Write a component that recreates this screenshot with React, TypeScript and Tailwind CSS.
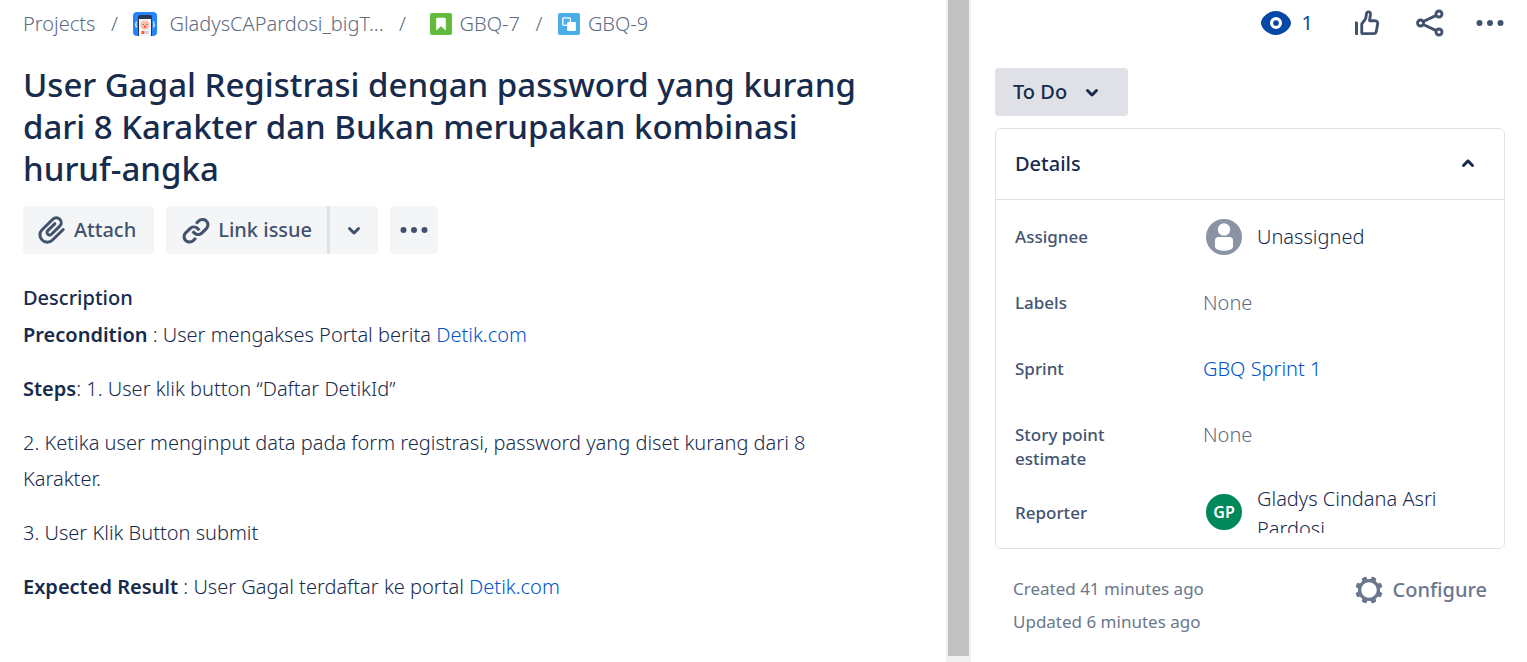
import type { ReactNode } from "react";

const chevronDown =
  "M8.292 10.293a1.009 1.009 0 000 1.419l2.939 2.965c.218.215.5.322.779.322s.556-.107.769-.322l2.93-2.955a1.01 1.01 0 000-1.419.987.987 0 00-1.406 0l-2.298 2.317-2.307-2.327a.99.99 0 00-1.406 0z";

function Icon({ children, className = "" }: { children: ReactNode; className?: string }) {
  return (
    <svg viewBox="0 0 24 24" fill="currentColor" aria-hidden="true" className={`size-9 shrink-0 ${className}`}>
      {children}
    </svg>
  );
}

function DotsIcon() {
  return (
    <Icon>
      <circle cx="5" cy="12" r="2" />
      <circle cx="12" cy="12" r="2" />
      <circle cx="19" cy="12" r="2" />
    </Icon>
  );
}

function ProjectAvatar() {
  return (
    <svg viewBox="0 0 24 24" className="size-6 shrink-0" aria-hidden="true">
      <rect width="24" height="24" rx="4" fill="#2684ff" />
      <path d="M5 24V5a2 2 0 012-2h10a2 2 0 012 2v19z" fill="#253858" />
      <path d="M6 7h12v17H6z" fill="#f4f5f7" />
      <circle cx="12" cy="13" r="4.500" fill="#ffbdad" />
      <path d="M9.500 12.500h1.500M13 12.500h1.500" stroke="#505f79" strokeWidth=".7" />
      <circle cx="12" cy="14.800" r="1.200" fill="#ff5630" />
      <rect x="8.500" y="19" width="3" height="3" fill="#ff5630" />
      <rect x="12.500" y="19" width="3" height="3" fill="#b3d4ff" />
      <path d="M3.500 9.500q-1.500 3 0 6M20.500 9.500q1.500 3 0 6" fill="none" stroke="#deebff" strokeWidth="1.300" />
    </svg>
  );
}

function StoryIcon() {
  return (
    <svg viewBox="0 0 16 16" className="size-[22px] shrink-0" aria-hidden="true">
      <rect width="16" height="16" rx="1.500" fill="#63ba3c" />
      <path d="M4.500 4.500a1 1 0 011-1h5a1 1 0 011 1v8.300L8 9.600l-3.500 3.200z" fill="#fff" />
    </svg>
  );
}

function SubtaskIcon() {
  return (
    <svg viewBox="0 0 16 16" className="size-[22px] shrink-0" aria-hidden="true">
      <rect width="16" height="16" rx="1.500" fill="#4bade8" />
      <rect x="3.500" y="3.500" width="5.500" height="5.500" rx=".8" fill="none" stroke="#fff" />
      <rect x="6.600" y="6.600" width="6.400" height="6.400" rx=".9" fill="#fff" />
    </svg>
  );
}

function Field({ label, children }: { label: string; children: ReactNode }) {
  return (
    <div className="flex min-h-[66px] items-start">
      <dt className="w-[188px] shrink-0 pt-[6px] pr-16 text-[17px] leading-6 font-medium text-[#44546f]">{label}</dt>
      <dd className="flex min-w-0 flex-1 items-center">{children}</dd>
    </div>
  );
}

function Slash() {
  return <span className="w-[38px] text-center">/</span>;
}

export default function App() {
  return (
    <div className="flex h-screen min-h-[662px] bg-white font-['Noto_Sans','Open_Sans',sans-serif] text-[20px] font-light text-[#172b4d]">
      <main className="min-w-0 flex-1 pr-16 pl-[23px]">
        <nav aria-label="Breadcrumb" className="flex h-12 items-center text-[#5e6c84]">
          <a href="#projects">Projects</a>
          <Slash />
          <a href="#project" className="flex items-center gap-3">
            <ProjectAvatar />
            GladysCAPardosi_bigT...
          </a>
          <Slash />
          <a href="#gbq-7" className="flex items-center gap-2 pl-2">
            <StoryIcon />
            GBQ-7
          </a>
          <Slash />
          <a href="#gbq-9" className="flex items-center gap-2">
            <SubtaskIcon />
            GBQ-9
          </a>
        </nav>

        <h1 className="mt-4 text-[33px] leading-[42px] font-medium">
          User Gagal Registrasi dengan password yang kurang dari 8 Karakter dan Bukan merupakan kombinasi huruf-angka
        </h1>

        <div className="mt-4 flex gap-3 font-medium text-[#42526e]">
          <button className="flex h-12 items-center gap-1 rounded bg-[#f4f5f7] pr-[18px] pl-[11px]">
            <Icon>
              <path d="M11.643 17.965c-1.53 1.495-4.016 1.496-5.542.004a3.773 3.773 0 01.002-5.412l7.147-6.985a2.316 2.316 0 013.24-.002 2.198 2.198 0 010 3.154l-5.55 5.422a.743.743 0 01-1.039 0 .709.709 0 01.001-1.02l4.742-4.63a1 1 0 00-1.397-1.431l-4.742 4.63a2.709 2.709 0 000 3.88 2.743 2.743 0 003.836 0l5.55-5.421a4.198 4.198 0 000-6.016 4.316 4.316 0 00-6.038.002l-7.147 6.985a5.773 5.773 0 00-.002 8.274 5.96 5.96 0 008.338.001l7.147-6.985a1 1 0 00-1.397-1.431z" />
            </Icon>
            Attach
          </button>
          <div className="flex">
            <button className="flex h-12 items-center gap-1 rounded-l bg-[#f4f5f7] pr-[15px] pl-3">
              <Icon>
                <path d="M12.856 5.457l-.937.92a1.002 1.002 0 000 1.437 1.047 1.047 0 001.463 0l.984-.966c.967-.95 2.542-1.135 3.602-.288a2.54 2.54 0 01.203 3.81l-2.903 2.852a2.646 2.646 0 01-3.696 0l-1.11-1.09L9 13.57l1.108 1.089c1.822 1.788 4.802 1.788 6.622 0l2.905-2.852a4.558 4.558 0 00-.357-6.82c-1.893-1.517-4.695-1.226-6.422.47" />
                <path d="M11.144 19.543l.937-.92a1.002 1.002 0 000-1.437 1.047 1.047 0 00-1.462 0l-.985.966c-.967.95-2.542 1.135-3.602.288a2.54 2.54 0 01-.203-3.81l2.903-2.852a2.646 2.646 0 013.696 0l1.11 1.09L15 11.43l-1.108-1.089c-1.822-1.788-4.802-1.788-6.622 0l-2.905 2.852a4.558 4.558 0 00.357 6.82c1.893 1.517 4.695 1.226 6.422-.47" />
              </Icon>
              Link issue
            </button>
            <button
              aria-label="More link options"
              className="flex h-12 w-[51px] items-center justify-center rounded-r border-l-3 border-[#dfe1e6] bg-[#f4f5f7]"
            >
              <Icon>
                <path d={chevronDown} />
              </Icon>
            </button>
          </div>
          <button aria-label="More actions" className="flex size-12 items-center justify-center rounded bg-[#f4f5f7]">
            <DotsIcon />
          </button>
        </div>

        <section className="mt-[26px]">
          <h2 className="leading-9 font-medium">Description</h2>
          <div className="flex flex-col gap-[18px] pt-px leading-9">
            <p>
              <strong className="font-semibold">Precondition</strong> : User mengakses Portal berita{" "}
              <a href="#detik" className="text-[#0052cc]">Detik.com</a>
            </p>
            <p>
              <strong className="font-semibold">Steps</strong>: 1. User klik button “Daftar DetikId”
            </p>
            <p>2. Ketika user menginput data pada form registrasi, password yang diset kurang dari 8 Karakter.</p>
            <p>3. User Klik Button submit</p>
            <p>
              <strong className="font-semibold">Expected Result</strong> : User Gagal terdaftar ke portal{" "}
              <a href="#detik" className="text-[#0052cc]">Detik.com</a>
            </p>
          </div>
        </section>
      </main>

      <div className="flex w-[25px] shrink-0 bg-[#f1f1f1] px-[2px] pb-[6px]" aria-hidden="true">
        <div className="flex-1 bg-[#c1c1c1]" />
      </div>

      <aside className="w-[556px] shrink-0 pr-[22px] pl-6">
        <div className="flex h-[46px] items-center justify-end text-[#42526e]">
          <button aria-label="Watchers" className="mr-[36px] flex items-center gap-[8px] font-normal text-[#0747a6]">
            <Icon>
              <path
                fillRule="evenodd"
                d="M12 4C7 4 2 8.500 2 12s5 8 10 8 10-4.500 10-8-5-8-10-8zm0 4a4 4 0 110 8 4 4 0 010-8z"
              />
              <circle cx="12" cy="12" r="1.900" />
            </Icon>
            1
          </button>
          <button aria-label="Like" className="mr-[27px]">
            <Icon>
              <path
                fill="none"
                stroke="currentColor"
                strokeWidth="1.900"
                strokeLinejoin="round"
                d="M8.500 18.800V12.600L11 9.200C11.500 8.300 11.400 6.500 11.700 5.500C12.200 4 14.500 4.400 14.300 6.300L13.700 10.500H17.300C18.800 10.500 19.300 11.500 19.100 12.700L18.200 17.500C18 18.700 17.300 19.100 16.300 19.100H9.300C8.800 19.100 8.500 19 8.500 18.800Z"
              />
              <path d="M4 11h1.200a.8.8 0 01.8.8V20H4.800a.8.8 0 01-.8-.8z" />
            </Icon>
          </button>
          <button aria-label="Share" className="mr-[24px]">
            <Icon>
              <g fill="none" stroke="currentColor" strokeWidth="1.900">
                <circle cx="5.700" cy="12" r="2" />
                <circle cx="18" cy="6" r="2" />
                <circle cx="18" cy="18" r="2" />
                <path d="M7.500 11l8.700-4.100M7.500 13l8.700 4.100" />
              </g>
            </Icon>
          </button>
          <button aria-label="Actions" className="-mr-[3px]">
            <DotsIcon />
          </button>
        </div>

        <button className="mt-[22px] flex h-12 items-center gap-[7px] rounded bg-[#dfe1e6] px-[18px] font-medium">
          To Do
          <Icon>
            <path d={chevronDown} />
          </Icon>
        </button>

        <section className="mt-3 rounded-md border border-[#dfe1e6]">
          <button className="flex h-[71px] w-full items-center justify-between border-b border-[#dfe1e6] pr-[18px] pl-[19px] font-medium">
            Details
            <Icon className="rotate-180">
              <path d={chevronDown} />
            </Icon>
          </button>
          <dl className="pt-[19px] pr-12 pb-[15px] pl-[19px]">
            <Field label="Assignee">
              <span className="flex items-center gap-[15px] pl-[3px] leading-9">
                <svg viewBox="0 0 36 36" className="size-9" aria-hidden="true">
                  <circle cx="18" cy="18" r="18" fill="#8993a4" />
                  <circle cx="18" cy="10.500" r="6.200" fill="#fff" />
                  <path d="M9 21.500a3.500 3.500 0 013.500-3.500h11a3.500 3.500 0 013.500 3.500v6c0 2.500-4 4.300-9 4.300s-9-1.800-9-4.300z" fill="#fff" />
                </svg>
                Unassigned
              </span>
            </Field>
            <Field label="Labels">
              <span className="leading-9 text-[#5e6c84]">None</span>
            </Field>
            <Field label="Sprint">
              <a href="#sprint" className="leading-9 text-[#0052cc]">GBQ Sprint 1</a>
            </Field>
            <Field label="Story point estimate">
              <span className="leading-9 text-[#5e6c84]">None</span>
            </Field>
            <div className="flex h-[50px] items-center overflow-hidden">
              <dt className="w-[188px] shrink-0 pt-[10px] text-[17px] leading-6 font-medium text-[#44546f]">Reporter</dt>
              <dd className="flex h-[50px] min-w-0 flex-1 items-start gap-[15px] pl-[3px]">
                <span className="mt-[11px] flex size-9 shrink-0 items-center justify-center rounded-full bg-[#00875a] text-[16px] font-semibold text-white">
                  GP
                </span>
                <span className="pt-px leading-[30px]">Gladys Cindana Asri Pardosi</span>
              </dd>
            </div>
          </dl>
        </section>

        <footer className="flex items-start justify-between pt-[23px] pr-[18px] pl-[18px] text-[#6b778c]">
          <p className="text-[17px] leading-[33px] font-normal">
            Created 41 minutes ago
            <br />
            Updated 6 minutes ago
          </p>
          <button className="flex items-center gap-[6px] font-medium">
            <Icon>
              <circle cx="12" cy="12" r="6.300" fill="none" stroke="currentColor" strokeWidth="2.200" />
              {[22.5, 67.5, 112.5, 157.5, 202.5, 247.5, 292.5, 337.5].map((angle) => (
                <rect key={angle} x="10.300" y="2.900" width="3.400" height="3.200" rx=".8" transform={`rotate(${angle} 12 12)`} />
              ))}
            </Icon>
            Configure
          </button>
        </footer>
      </aside>
    </div>
  );
}
